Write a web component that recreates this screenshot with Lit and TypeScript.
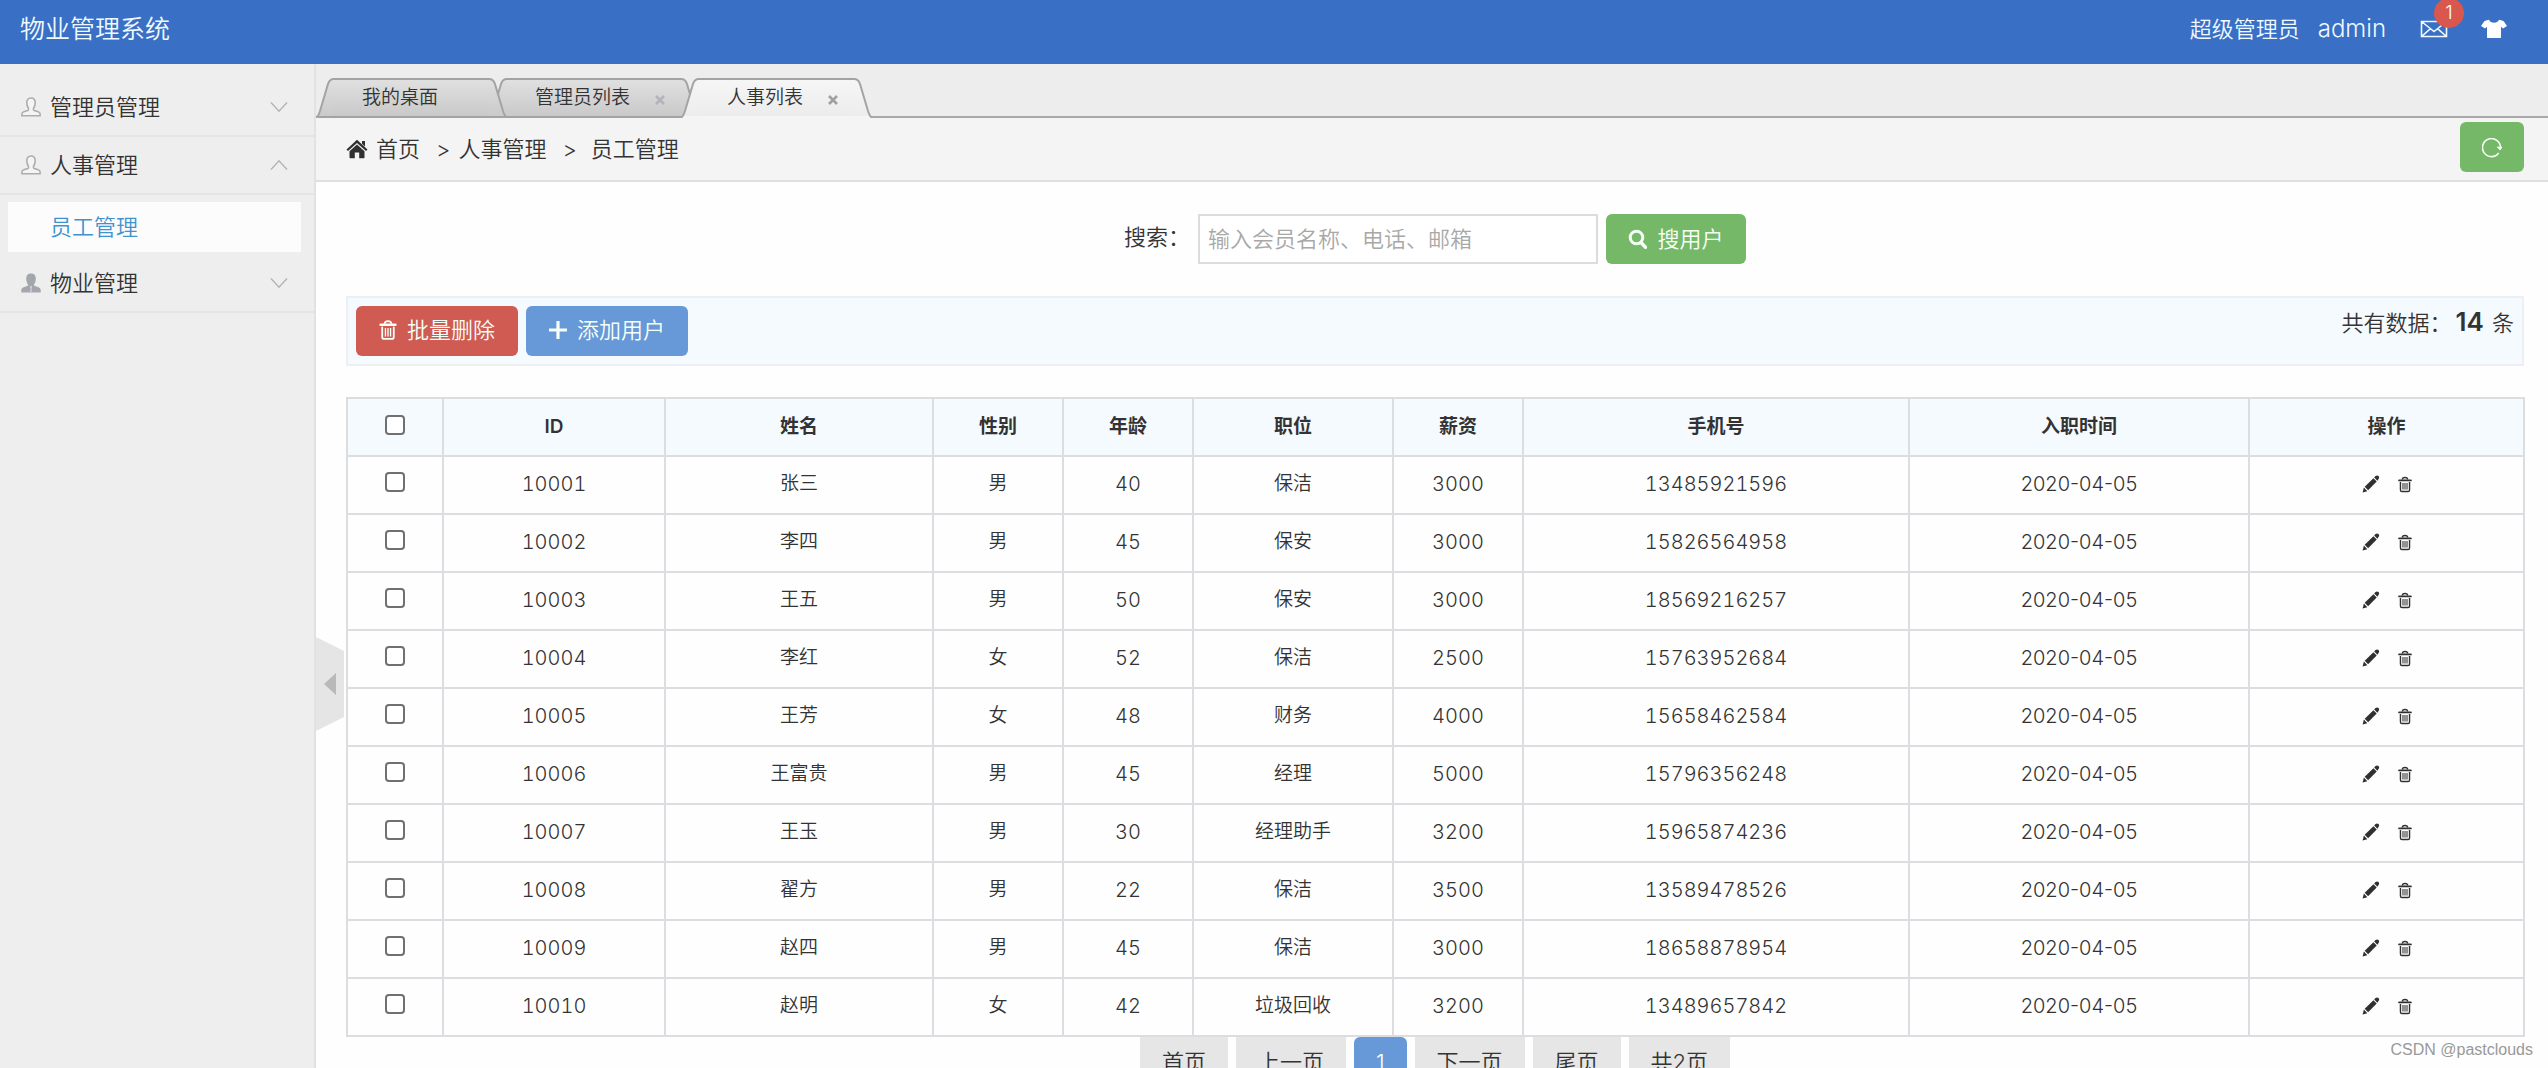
import { LitElement, html, css, svg, nothing } from "lit";
import { customElement, state } from "lit/decorators.js";
import { classMap } from "lit/directives/class-map.js";

interface Employee {
  id: string;
  name: string;
  gender: string;
  age: number;
  job: string;
  salary: number;
  phone: string;
  hired: string;
}

const EMPLOYEES: Employee[] = [
  { id: "10001", name: "张三", gender: "男", age: 40, job: "保洁", salary: 3000, phone: "13485921596", hired: "2020-04-05" },
  { id: "10002", name: "李四", gender: "男", age: 45, job: "保安", salary: 3000, phone: "15826564958", hired: "2020-04-05" },
  { id: "10003", name: "王五", gender: "男", age: 50, job: "保安", salary: 3000, phone: "18569216257", hired: "2020-04-05" },
  { id: "10004", name: "李红", gender: "女", age: 52, job: "保洁", salary: 2500, phone: "15763952684", hired: "2020-04-05" },
  { id: "10005", name: "王芳", gender: "女", age: 48, job: "财务", salary: 4000, phone: "15658462584", hired: "2020-04-05" },
  { id: "10006", name: "王富贵", gender: "男", age: 45, job: "经理", salary: 5000, phone: "15796356248", hired: "2020-04-05" },
  { id: "10007", name: "王玉", gender: "男", age: 30, job: "经理助手", salary: 3200, phone: "15965874236", hired: "2020-04-05" },
  { id: "10008", name: "翟方", gender: "男", age: 22, job: "保洁", salary: 3500, phone: "13589478526", hired: "2020-04-05" },
  { id: "10009", name: "赵四", gender: "男", age: 45, job: "保洁", salary: 3000, phone: "18658878954", hired: "2020-04-05" },
  { id: "10010", name: "赵明", gender: "女", age: 42, job: "垃圾回收", salary: 3200, phone: "13489657842", hired: "2020-04-05" },
];

const COLUMNS = [
  { label: "ID", cls: "c-id" },
  { label: "姓名", cls: "c-name" },
  { label: "性别", cls: "c-small" },
  { label: "年龄", cls: "c-small" },
  { label: "职位", cls: "c-job" },
  { label: "薪资", cls: "c-small" },
  { label: "手机号", cls: "c-phone" },
  { label: "入职时间", cls: "c-date" },
  { label: "操作", cls: "c-ops" },
];

const USER_PATH =
  "M10 1c2.700 0 4.200 2 4.200 4.800 0 2-.6 3.800-1.500 5.200-.5.9-.4 2 .5 2.400l4 1.400c1.300.4 1.900 1.200 1.900 2.300v1.700H.9v-1.700c0-1.100.6-1.900 1.900-2.300l4-1.400c.9-.4 1-1.500.5-2.400C6.400 9.600 5.800 7.800 5.800 5.800 5.800 3 7.300 1 10 1z";

const userIcon = (solid: boolean) => html`<svg class="user" viewBox="0 0 20 20" aria-hidden="true">
  ${solid
    ? svg`<path d=${USER_PATH} fill="#a3a6ac" stroke="#a3a6ac" stroke-width="1.200" /><path d="M10 13v6M9 14h2" stroke="#dcdce0" stroke-width="1" />`
    : svg`<path d=${USER_PATH} fill="#f4f4f4" stroke="#adadad" stroke-width="1.600" />`}
</svg>`;

const chevron = (up: boolean) => html`<svg class="chevron" viewBox="0 0 18 10" aria-hidden="true">
  <path d=${up ? "M1 9.500 9 .8 17 9.500" : "M1 .5 9 9.200 17 .5"} fill="none" stroke="#b4b4b4" stroke-width="1.400" />
</svg>`;

const trashIcon = html`<svg class="trash" viewBox="0 0 16 18" aria-hidden="true">
  <path d="M5 3.400c0-1.600.8-2.400 3-2.400s3 .8 3 2.400" fill="none" stroke="currentColor" stroke-width="1.600" />
  <path d="M1.300 4.300h13.400" stroke="currentColor" stroke-width="2.200" stroke-linecap="round" />
  <path d="M2.800 6v9.200c0 1.100.6 1.800 1.700 1.800h7c1.100 0 1.700-.7 1.700-1.800V6" fill="none" stroke="currentColor" stroke-width="1.600" />
  <path d="M5.700 7.200v7.600M8 7.200v7.600M10.300 7.200v7.600" stroke="currentColor" stroke-width="1.200" />
</svg>`;

const pencilIcon = html`<svg class="pencil" viewBox="0 0 18 18" aria-hidden="true">
  <path d="M.6 17.400 1.900 12.600 5.300 16.200z" />
  <path d="M2.700 11.700 11.400 3.200 14.700 6.500 6.100 15.300z" />
  <path d="M12.200 2.400 13.500 1.100c1.100-1 2.300-.8 3 0 .9.900.9 2 0 2.900L15.400 5.700z" />
</svg>`;

@customElement("app-root")
export class AppRoot extends LitElement {
  @state() private selected = new Set<string>();

  static styles = css`
    :host {
      display: flex;
      flex-direction: column;
      position: relative;
      height: 100vh;
      overflow: hidden;
      background: #fefefe;
      color: #333;
      font-family: Inter, "Noto Sans CJK SC", sans-serif;
      font-size: 22px;
      font-weight: 350;
      line-height: 32px;
    }
    * { box-sizing: border-box; }
    svg { display: block; flex: none; }
    button, input { font: inherit; color: inherit; margin: 0; }
    button { border: 0; padding: 0; background: none; cursor: pointer; white-space: nowrap; }
    a { color: inherit; text-decoration: none; }

    .header {
      display: flex;
      flex: none;
      align-items: center;
      justify-content: space-between;
      height: 64px;
      padding: 0 40px 6px 20px;
      background: #396fc5;
      color: #effaff;
    }
    .title { margin: 0; font-size: 25px; font-weight: 350; }
    .account { display: flex; align-items: center; }
    .role { margin-right: 18px; }
    .who { font-size: 24px; }
    .mail { position: relative; margin-left: 34px; }
    .mail svg { width: 28px; height: 18px; }
    .badge {
      position: absolute;
      left: 14px;
      top: -22px;
      width: 30px;
      height: 30px;
      border-radius: 50%;
      background: #d9574c;
      color: #fff;
      font-size: 19px;
      line-height: 30px;
      text-align: center;
    }
    .skin { margin-left: 32px; }
    .skin svg { width: 28px; height: 20px; }

    .body { display: flex; flex: 1; min-height: 0; }

    .sidebar {
      flex: none;
      width: 316px;
      padding-top: 15px;
      background: #eeeeee;
      border-right: 2px solid #e2e2e2;
    }
    .group {
      display: flex;
      align-items: center;
      width: 100%;
      height: 58px;
      padding: 0 26px 0 21px;
      border-bottom: 2px solid #e5e5e5;
      text-align: left;
    }
    .group .label { flex: 1; margin-left: 9px; }
    .user { width: 20px; height: 20px; }
    .chevron { width: 18px; height: 10px; }
    .sub { padding: 7px 13px 3px 8px; }
    .sub a {
      display: block;
      height: 50px;
      padding-left: 42px;
      background: #fcfcfc;
      color: #3f93cf;
      line-height: 50px;
    }

    .main { position: relative; display: flex; flex-direction: column; flex: 1; min-width: 0; }
    .tabs {
      display: flex;
      flex: none;
      align-items: flex-end;
      height: 54px;
      background: #ededed;
      border-bottom: 2px solid #a9a9a9;
    }
    .tab { position: relative; display: flex; height: 40px; margin: 0 -18px -2px 0; font-size: 19px; }
    .tab:nth-child(1) { z-index: 2; }
    .tab:nth-child(2) { z-index: 1; }
    .tab.active { z-index: 3; }
    .tab .edge { width: 18px; height: 40px; }
    .tab .edge-l { margin-right: -1px; }
    .tab .edge-r { margin-left: -1px; }
    .face {
      display: flex;
      align-items: center;
      padding-left: 29px;
      border-top: 2px solid #a3a3a3;
      border-bottom: 2px solid #a3a3a3;
      background: linear-gradient(#e0e0e0, #c9c9c9);
    }
    .active .face { border-bottom-color: #f5f5f5; background: linear-gradient(#f6f6f6, #ececec); }
    .close { display: flex; justify-content: center; width: 52px; padding: 4px 0 0 8px; color: #b3b3ba; }
    .close svg { width: 12px; height: 12px; }
    .active .close { color: #a0a0a4; }

    .crumbs {
      display: flex;
      flex: none;
      align-items: center;
      height: 64px;
      padding: 0 24px 4px 30px;
      background: #f4f4f4;
      border-bottom: 2px solid #e0e0e0;
    }
    .trail { display: flex; flex: 1; align-items: center; padding-top: 4px; }
    .home { width: 22px; height: 20px; margin-right: 8px; }
    .sep-a { margin: 0 8px 0 16px; }
    .sep-b { margin: 0 14px 0 16px; }

    .btn {
      display: flex;
      align-items: center;
      justify-content: center;
      height: 50px;
      padding: 0 22px;
      border-radius: 6px;
      color: #f5fff8;
    }
    .green { background: #75b868; }
    .red { background: #cf5b53; }
    .blue { background: #6798d7; }
    .refresh { width: 64px; padding: 2px 0 0; }
    .refresh svg { width: 20px; height: 20px; }

    .content { padding: 32px 24px 0 30px; }
    .search { display: flex; justify-content: center; align-items: center; gap: 8px; }
    .search label { padding-bottom: 4px; }
    .search input {
      width: 400px;
      height: 50px;
      padding: 0 8px;
      border: 2px solid #dcdcdc;
      background: #fff;
      outline: none;
    }
    .search input::placeholder { color: #a8a8a8; opacity: 1; }
    .search .btn { width: 140px; }
    .search .btn svg { width: 19px; height: 20px; margin-right: 10px; }

    .toolbar {
      display: flex;
      align-items: flex-start;
      gap: 8px;
      height: 70px;
      margin-top: 32px;
      padding: 8px;
      background: #f5fafe;
      border: 2px solid #eceff4;
    }
    .toolbar .btn { width: 162px; padding-bottom: 2px; }
    .toolbar .btn svg { margin-right: 10px; }
    .toolbar .trash { width: 18px; height: 20px; }
    .plus { width: 18px; height: 18px; }
    .total { margin-left: auto; }
    .total strong { margin: 0 2px 0 4px; font-size: 26px; font-weight: 600; }

    table {
      width: 100%;
      margin-top: 31px;
      border-collapse: collapse;
      table-layout: fixed;
      font-size: 20px;
      font-variant-numeric: tabular-nums;
    }
    th, td {
      height: 58px;
      padding: 0;
      border: 2px solid #dcdde0;
      text-align: center;
      vertical-align: middle;
      line-height: 28px;
    }
    th { background: #f5fafe; font-size: 19px; font-weight: 600; }
    td { padding-bottom: 2px; }
    td.cjk { font-size: 19px; }
    td.date { font-variant-numeric: normal; }
    .c-check { width: 96px; }
    .c-id { width: 222px; }
    .c-name { width: 268px; }
    .c-small { width: 130px; }
    .c-job { width: 200px; }
    .c-phone { width: 386px; }
    .c-date { width: 340px; }
    .c-ops { width: 275px; }
    .tick {
      appearance: none;
      display: block;
      width: 20px;
      height: 20px;
      margin: 0 auto 4px;
      border: 2px solid #707070;
      border-radius: 4px;
      background: #fff;
    }
    .tick:checked { background: #6798d7; border-color: #6798d7; }
    .ops { display: flex; justify-content: center; gap: 18px; color: #303030; }
    .ops .pencil { width: 18px; height: 18px; fill: currentColor; }
    .ops .trash { width: 14px; height: 17px; }

    .pager { display: flex; justify-content: center; gap: 8px; }
    .pager a, .pager span {
      height: 50px;
      padding: 0 22px;
      background: #e6e6e6;
      line-height: 50px;
    }
    .pager .current { border-radius: 6px; background: #6798d7; color: #fff; }

    .handle { position: absolute; left: 0; top: 573px; }
    .handle svg { width: 28px; height: 94px; }
    .watermark {
      position: absolute;
      right: 15px;
      bottom: 6px;
      color: #999;
      font-family: "Liberation Sans", sans-serif;
      font-size: 16px;
      line-height: 24px;
    }
  `;

  private toggle(id: string) {
    const next = new Set(this.selected);
    next.has(id) ? next.delete(id) : next.add(id);
    this.selected = next;
  }

  private toggleAll() {
    this.selected = this.selected.size === EMPLOYEES.length ? new Set() : new Set(EMPLOYEES.map((e) => e.id));
  }

  private renderTab(label: string, active: boolean, closable: boolean) {
    const fill = active ? "url(#lit)" : "url(#dim)";
    const gradient = svg`<defs>
      <linearGradient id="lit" x1="0" y1="0" x2="0" y2="1"><stop offset="0" stop-color="#f6f6f6" /><stop offset="1" stop-color="#ececec" /></linearGradient>
      <linearGradient id="dim" x1="0" y1="0" x2="0" y2="1"><stop offset="0" stop-color="#e0e0e0" /><stop offset="1" stop-color="#c9c9c9" /></linearGradient>
    </defs>`;
    const base = active ? "#f5f5f5" : "#a3a3a3";
    return html`<div class=${classMap({ tab: true, active })}>
      <svg class="edge edge-l" viewBox="0 0 18 40" aria-hidden="true">
        ${gradient}
        <path d="M0 40C2 39 3 36 4 33L12 6Q13.500 1 18 1V40z" fill=${fill} />
        <path d="M2 39H18" stroke=${base} stroke-width="2" />
        <path d="M0 39.500C2 39 3 36 4 33L12 6Q13.500 1 18 1" fill="none" stroke="#a3a3a3" stroke-width="2" />
      </svg>
      <div class="face">
        <span>${label}</span>
        ${closable
          ? html`<button class="close" aria-label="关闭 ${label}"><svg viewBox="0 0 12 12"><path d="M2 2 10 10M10 2 2 10" stroke="currentColor" stroke-width="2.600" /></svg></button>`
          : html`<span class="close"></span>`}
      </div>
      <svg class="edge edge-r" viewBox="0 0 18 40" aria-hidden="true">
        ${gradient}
        <path d="M18 40C16 39 15 36 14 33L6 6Q4.500 1 0 1V40z" fill=${fill} />
        <path d="M0 39H16" stroke=${base} stroke-width="2" />
        <path d="M18 39.500C16 39 15 36 14 33L6 6Q4.500 1 0 1" fill="none" stroke="#a3a3a3" stroke-width="2" />
      </svg>
    </div>`;
  }

  private renderRow(e: Employee) {
    return html`<tr>
      <td><input class="tick" type="checkbox" aria-label="选择 ${e.id}" .checked=${this.selected.has(e.id)} @change=${() => this.toggle(e.id)} /></td>
      <td>${e.id}</td>
      <td class="cjk">${e.name}</td>
      <td class="cjk">${e.gender}</td>
      <td>${e.age}</td>
      <td class="cjk">${e.job}</td>
      <td>${e.salary}</td>
      <td>${e.phone}</td>
      <td class="date">${e.hired}</td>
      <td><div class="ops"><button aria-label="编辑">${pencilIcon}</button><button aria-label="删除">${trashIcon}</button></div></td>
    </tr>`;
  }

  private renderGroup(label: string, open: boolean, solid: boolean) {
    return html`<button class="group" aria-expanded=${open ? "true" : "false"}>
      ${userIcon(solid)}<span class="label">${label}</span>${chevron(open)}
    </button>
    ${open ? html`<div class="sub"><a href="#staff">员工管理</a></div>` : nothing}`;
  }

  render() {
    return html`
      <header class="header">
        <h1 class="title">物业管理系统</h1>
        <div class="account">
          <span class="role">超级管理员</span>
          <span class="who">admin</span>
          <button class="mail" aria-label="消息">
            <svg viewBox="0 0 28 18" fill="none" stroke="currentColor" stroke-width="1.600" aria-hidden="true">
              <path d="M1.500 1.500h25v15h-25zM1.500 1.500 14 11.500 26.500 1.500M1.500 16.500 10.500 8.700M26.500 16.500 17.500 8.700" />
            </svg>
            <span class="badge">1</span>
          </button>
          <button class="skin" aria-label="换肤">
            <svg viewBox="0 0 28 20" fill="#fff" aria-hidden="true">
              <path d="M9 .8c1 2.200 2.800 3 5 3s4-.8 5-3l3 .6c1 .2 1.700.8 2.300 1.600L27 7l-4 2.600-2-1.800V18.200q0 .9-1 .9H8q-1 0-1-.9V7.800L5 9.600 1 7 3.700 3c.6-.8 1.300-1.400 2.300-1.600z" />
            </svg>
          </button>
        </div>
      </header>
      <div class="body">
        <nav class="sidebar">
          ${this.renderGroup("管理员管理", false, false)}
          ${this.renderGroup("人事管理", true, false)}
          ${this.renderGroup("物业管理", false, true)}
        </nav>
        <main class="main">
          <div class="tabs">
            ${this.renderTab("我的桌面", false, false)}
            ${this.renderTab("管理员列表", false, true)}
            ${this.renderTab("人事列表", true, true)}
          </div>
          <div class="crumbs">
            <div class="trail">
              <svg class="home" viewBox="0 0 22 20" fill="#303030" aria-hidden="true">
                <path d="M11 .8 21.500 10.400 20 12 11 4 2 12 .5 10.400zM16 2h3v5.500l-3-2.700z" />
                <path d="M11 5.500 18.500 12.200V18.500q0 .8-.8.800H13.200V13.500H8.800V19.300H4.300q-.8 0-.8-.8V12.200z" />
              </svg>
              <a href="#home">首页</a><span class="sep-a">&gt;</span><a href="#hr">人事管理</a><span class="sep-b">&gt;</span><span>员工管理</span>
            </div>
            <button class="btn green refresh" aria-label="刷新">
              <svg viewBox="0 0 20 20" fill="none" stroke="currentColor" stroke-width="1.600" aria-hidden="true">
                <path d="M16.700 15A9 9 0 1 1 18.500 9.500" /><path d="M15.200 9h5L18.200 12z" fill="currentColor" stroke-width=".8" />
              </svg>
            </button>
          </div>
          <div class="content">
            <form class="search" @submit=${(ev: Event) => ev.preventDefault()}>
              <label for="q">搜索：</label>
              <input id="q" type="text" placeholder="输入会员名称、电话、邮箱" />
              <button class="btn green">
                <svg viewBox="0 0 19 20" fill="none" stroke="currentColor" aria-hidden="true">
                  <circle cx="8.500" cy="8.500" r="6.300" stroke-width="3" /><path d="M13 13.500 17.500 18.200" stroke-width="3.400" stroke-linecap="round" />
                </svg>搜用户
              </button>
            </form>
            <div class="toolbar">
              <button class="btn red">${trashIcon}批量删除</button>
              <button class="btn blue">
                <svg class="plus" viewBox="0 0 18 18" stroke="currentColor" stroke-width="3.200" aria-hidden="true"><path d="M9 0V18M0 9H18" /></svg>添加用户
              </button>
              <span class="total">共有数据：<strong>14</strong> 条</span>
            </div>
            <table>
              <thead>
                <tr>
                  <th class="c-check"><input class="tick" type="checkbox" aria-label="全选" .checked=${this.selected.size === EMPLOYEES.length} @change=${this.toggleAll} /></th>
                  ${COLUMNS.map((c) => html`<th class=${c.cls}>${c.label}</th>`)}
                </tr>
              </thead>
              <tbody>${EMPLOYEES.map((e) => this.renderRow(e))}</tbody>
            </table>
            <nav class="pager">
              <a href="#first">首页</a><a href="#prev">上一页</a><a class="current" href="#p1">1</a><a href="#next">下一页</a><a href="#last">尾页</a><span>共2页</span>
            </nav>
          </div>
          <button class="handle" aria-label="收起菜单">
            <svg viewBox="0 0 28 94" aria-hidden="true"><path d="M0 0 28 14V80L0 94z" fill="#e5e5e5" /><path d="M8 47 20 36V58z" fill="#b9b9b9" /></svg>
          </button>
        </main>
      </div>
      <div class="watermark">CSDN @pastclouds</div>
    `;
  }
}
